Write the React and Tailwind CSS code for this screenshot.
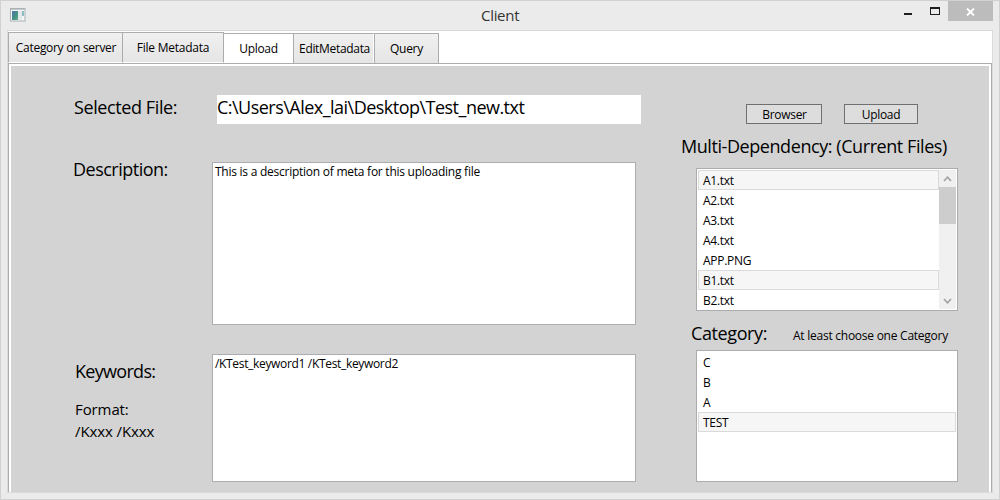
const files = [
  { name: 'A1.txt', selected: true },
  { name: 'A2.txt' },
  { name: 'A3.txt' },
  { name: 'A4.txt' },
  { name: 'APP.PNG' },
  { name: 'B1.txt', selected: true },
  { name: 'B2.txt' },
];

const categories = [{ name: 'C' }, { name: 'B' }, { name: 'A' }, { name: 'TEST', selected: true }];

function ListRows({ items }) {
  return (
    <ul className="flex-1">
      {items.map((item) => (
        <li
          key={item.name}
          className={
            'h-5 border pl-1 text-xs leading-[20px] tracking-[-0.3px] ' +
            (item.selected ? 'border-[#dadada] bg-[#f6f6f6]' : 'border-transparent')
          }
        >
          {item.name}
        </li>
      ))}
    </ul>
  );
}

function Chevron({ d }) {
  return (
    <svg width="9" height="6" viewBox="0 0 9 6" fill="none" stroke="#a3a3a3" strokeWidth="1.7">
      <path d={d} />
    </svg>
  );
}

function TitleBar() {
  return (
    <header className="flex h-[29px] shrink-0 items-start">
      <svg className="mt-[7px] ml-[9px]" width="16" height="14" viewBox="0 0 16 14">
        <defs>
          <linearGradient id="pane" x1="0" y1="0" x2="1" y2="1">
            <stop offset="0" stopColor="#4a76b0" />
            <stop offset="0.6" stopColor="#459383" />
            <stop offset="1" stopColor="#66b089" />
          </linearGradient>
        </defs>
        <rect x="0.5" y="0.5" width="14.5" height="12.5" fill="#f5f7f7" stroke="#a9b2b6" />
        <path d="M1 1.5h14" stroke="#c3c9cb" />
        <rect x="2" y="3" width="6" height="9" fill="url(#pane)" />
        <rect x="8" y="3" width="4" height="9" fill="#e3e8ea" />
        <rect x="12" y="3" width="2" height="5" fill="#8fbdc0" />
      </svg>
      <h1 className="ml-[455px] w-[60px] text-[15px] leading-[29px] tracking-[-0.3px] text-[#333]">Client</h1>
      <div className="ml-auto flex h-5">
        <svg width="44" height="20" viewBox="0 0 44 20" shapeRendering="crispEdges">
          <path d="M0 12h8v2H0z" fill="#1e1e1e" />
          <path d="M26 6h10v8H26zM27 8v5h8V8z" fill="#1e1e1e" fillRule="evenodd" />
        </svg>
      </div>
      <div className="mr-[6px] flex h-5 w-[45px] items-center justify-center bg-[#bcbcbc] pt-px">
        <svg width="9" height="8" viewBox="0 0 9 8" stroke="#fff" strokeWidth="1.8">
          <path d="M1 .5 8 7.5M8 .5 1 7.5" />
        </svg>
      </div>
    </header>
  );
}

const inactive = 'border border-[#acacac] bg-linear-to-b from-[#f0f0f0] to-[#e5e5e5] ';

function Tabs() {
  return (
    <nav className="flex h-8 shrink-0 items-end pt-px text-xs">
      <div className={inactive + 'flex h-[31px] w-[115px] items-center justify-center border-b-white pl-px tracking-[-0.3px]'}>
        <span className="whitespace-nowrap">Category on server</span>
      </div>
      <div className={inactive + 'flex h-[31px] w-[101px] items-center justify-center border-l-0 border-b-white tracking-[-0.25px]'}>
        File Metadata
      </div>
      <div className="-mb-px flex h-[31px] w-[69px] items-center justify-center border-t border-[#acacac] bg-white tracking-[-0.3px]">
        Upload
      </div>
      <div className={inactive + 'flex h-[30px] w-[81px] items-center justify-center border-r-white border-b-0 pt-px pl-[2px] tracking-[-0.32px]'}>
        EditMetadata
      </div>
      <div className={inactive + 'flex h-[30px] w-[65px] items-center justify-center border-b-0 pt-px tracking-[-0.3px]'}>
        Query
      </div>
    </nav>
  );
}

export default function App() {
  return (
    <div className="flex h-[500px] w-[1000px] flex-col overflow-hidden border border-[#d1d1d1] bg-[#ebebeb] font-['Open_Sans',sans-serif] text-black">
      <TitleBar />
      <main className="mx-[6px] mb-[6px] flex min-h-0 flex-1 flex-col border border-[#dadada] bg-white">
        <Tabs />
        <section className="flex min-h-0 flex-1 border border-b-0 border-[#acacac] px-[2px] pt-[2px]">
          <div className="flex flex-1 bg-[#d3d3d3]">
            <div className="w-[201px] shrink-0 pl-[63px] text-lg leading-6 whitespace-nowrap">
              <p className="mt-[29px] tracking-[-0.4px]">Selected File:</p>
              <p className="mt-[38px] -ml-px tracking-[-0.5px]">Description:</p>
              <p className="mt-[178px] ml-px tracking-[-0.7px]">Keywords:</p>
              <p className="mt-[15px] ml-px text-[15px] leading-[22px] tracking-[-0.1px]">
                Format:
                <br />
                /Kxxx /Kxxx
              </p>
            </div>
            <div className="flex w-[430px] shrink-0 flex-col whitespace-nowrap">
              <div className="mt-[29px] ml-[5px] h-[29px] w-[424px] bg-white text-lg leading-[25px] tracking-[-0.52px]">
                C:\Users\Alex_lai\Desktop\Test_new.txt
              </div>
              <div className="mt-[38px] h-[163px] w-[424px] border border-[#abadb3] bg-white pl-[2px] text-xs leading-[18px] tracking-[-0.25px]">
                This is a description of meta for this uploading file
              </div>
              <div className="mt-[29px] h-[128px] w-[424px] border border-[#abadb3] bg-white pl-[2px] text-xs leading-[18px] tracking-[-0.33px]">
                /KTest_keyword1 /KTest_keyword2
              </div>
            </div>
            <div className="ml-[39px] flex w-[280px] shrink-0 flex-col whitespace-nowrap">
              <div className="mt-[38px] ml-[65px] flex gap-[22px] text-xs tracking-[-0.3px]">
                <button className="h-5 w-[76px] border border-[#707070] bg-[#dddddd] pt-px pl-px">Browser</button>
                <button className="h-5 w-[74px] border border-[#707070] bg-[#dddddd] pt-px">Upload</button>
              </div>
              <h2 className="mt-[10px] mb-px h-6 text-lg leading-6 tracking-[-0.43px]">Multi-Dependency: (Current Files)</h2>
              <div className="mt-[9px] ml-[15px] flex h-[143px] w-[262px] border border-[#acacac] bg-white p-px">
                <ListRows items={files} />
                <div className="flex w-[17px] flex-col items-center bg-[#f0f0f0]">
                  <div className="flex h-[17px] items-center">
                    <Chevron d="M1 5 4.5 1.2 8 5" />
                  </div>
                  <div className="h-[37px] w-full bg-[#cdcdcd]" />
                  <div className="mt-auto flex h-[17px] items-center">
                    <Chevron d="M1 1 4.5 4.8 8 1" />
                  </div>
                </div>
              </div>
              <div className="mt-[10px] mb-px ml-[10px] flex h-6 items-center">
                <h2 className="w-[102px] text-lg leading-6 tracking-[-0.4px]">Category:</h2>
                <span className="mt-[5px] text-xs tracking-[-0.25px]">At least choose one Category</span>
              </div>
              <div className="mt-[4px] ml-[15px] flex h-[132px] w-[262px] border border-[#acacac] bg-white p-px">
                <ListRows items={categories} />
              </div>
            </div>
          </div>
        </section>
      </main>
    </div>
  );
}
